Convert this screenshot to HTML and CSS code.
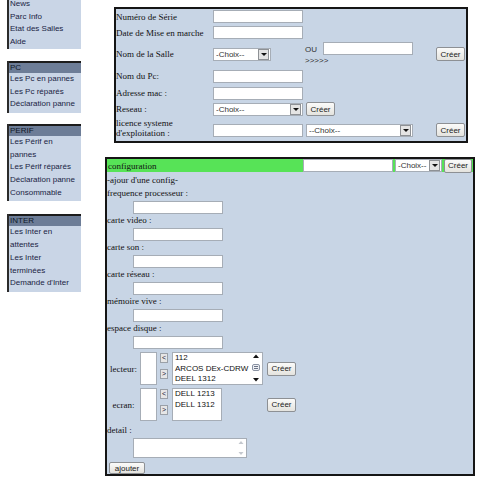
FILE: index.html
```html
<!DOCTYPE html>
<html lang="fr">
<head>
    <meta charset="UTF-8">
    <meta name="viewport" content="width=device-width, initial-scale=1.0">
    <title>Gestion du parc informatique</title>
    <link rel="stylesheet" href="styles.css">
</head>
<body>
<div class="page">
    <div class="menu">
        <div class="bloc premier">
            <ul>
                <li><a href="#">News</a></li>
                <li><a href="#">Parc Info</a></li>
                <li><a href="#">Etat des Salles</a></li>
                <li><a href="#">Aide</a></li>
            </ul>
        </div>
        <div class="bloc bloc-pc">
            <div class="titre">PC</div>
            <ul>
                <li><a href="#">Les Pc en pannes</a></li>
                <li><a href="#">Les Pc réparés</a></li>
                <li><a href="#">Déclaration panne</a></li>
            </ul>
        </div>
        <div class="bloc bloc-perif">
            <div class="titre">PERIF</div>
            <ul>
                <li><a href="#">Les Périf en<br>pannes</a></li>
                <li><a href="#">Les Périf réparés</a></li>
                <li><a href="#">Déclaration panne</a></li>
                <li><a href="#">Consommable</a></li>
            </ul>
        </div>
        <div class="bloc">
            <div class="titre">INTER</div>
            <ul>
                <li><a href="#">Les Inter en<br>attentes</a></li>
                <li><a href="#">Les Inter<br>terminées</a></li>
                <li><a href="#">Demande d'Inter</a></li>
            </ul>
        </div>
    </div>

    <div class="principal">
        <form class="fiche">
            <label>Numéro de Série</label>
            <input type="text" class="champ">

            <label>Date de Mise en marche</label>
            <input type="text" class="champ">

            <label>Nom de la Salle</label>
            <span class="deroulant sel-salle"><select><option>-Choix--</option></select><i class="fleche"></i></span>
            <div class="ou">
                <div class="ou-ligne"><span>OU</span><input type="text" class="champ"></div>
                <div class="fleches">&gt;&gt;&gt;&gt;&gt;</div>
            </div>
            <button type="button" class="bouton col4">Créer</button>

            <label>Nom du Pc:</label>
            <input type="text" class="champ">

            <label>Adresse mac :</label>
            <input type="text" class="champ">

            <label>Reseau :</label>
            <span class="deroulant sel-reseau"><select><option>-Choix--</option></select><i class="fleche"></i></span>
            <button type="button" class="bouton col3 decale">Créer</button>

            <label class="double">licence systeme d'exploitation :</label>
            <input type="text" class="champ bas">
            <span class="deroulant sel-os col3 decale bas"><select><option>--Choix--</option></select><i class="fleche"></i></span>
            <button type="button" class="bouton col4 bas">Créer</button>
        </form>

        <form class="config">
            <div class="entete">
                <span>configuration</span>
                <input type="text" class="champ">
                <span class="deroulant sel-config"><select><option>-Choix--</option></select><i class="fleche"></i></span>
                <button type="button" class="bouton">Créer</button>
            </div>
            <div class="corps">
                <div class="ligne">-ajour d'une config-</div>
                <div class="ligne">frequence processeur :</div>
                <input type="text" class="champ retrait">
                <div class="ligne">carte video :</div>
                <input type="text" class="champ retrait">
                <div class="ligne">carte son :</div>
                <input type="text" class="champ retrait">
                <div class="ligne">carte réseau :</div>
                <input type="text" class="champ retrait">
                <div class="ligne">mémoire vive :</div>
                <input type="text" class="champ retrait">
                <div class="ligne">espace disque :</div>
                <input type="text" class="champ retrait">

                <div class="choix">
                    <span class="nom">lecteur:</span>
                    <div class="liste petite"></div>
                    <div class="fleches-v"><button type="button">&lt;</button><button type="button">&gt;</button></div>
                    <div class="liste grande">
                        <div class="items">
                            <div>112</div>
                            <div>ARCOS DEx-CDRW</div>
                            <div>DEEL 1312</div>
                        </div>
                        <svg class="defile" width="8" height="30" viewBox="0 0 8 30">
                            <polygon points="1,5 4,1.5 7,5" fill="#111"/>
                            <rect x="0.5" y="11.5" width="7" height="6" rx="1.5" fill="#eef0f4" stroke="#8a93a3"/>
                            <line x1="2" y1="13.5" x2="6" y2="13.5" stroke="#6b7487"/>
                            <line x1="2" y1="15.5" x2="6" y2="15.5" stroke="#6b7487"/>
                            <polygon points="1,25 4,28.5 7,25" fill="#111"/>
                        </svg>
                    </div>
                    <button type="button" class="bouton">Créer</button>
                </div>

                <div class="choix">
                    <span class="nom">ecran:</span>
                    <div class="liste petite"></div>
                    <div class="fleches-v"><button type="button">&lt;</button><button type="button">&gt;</button></div>
                    <div class="liste moyenne">
                        <div class="items">
                            <div>DELL 1213</div>
                            <div>DELL 1312</div>
                        </div>
                    </div>
                    <button type="button" class="bouton">Créer</button>
                </div>

                <div class="ligne detail">detail :</div>
                <div class="zone retrait">
                    <svg class="defile" width="8" height="18" viewBox="0 0 8 18">
                        <polygon points="1.5,5 4,2 6.5,5" fill="#c4c8cf"/>
                        <polygon points="1.5,13 4,16 6.5,13" fill="#c4c8cf"/>
                    </svg>
                </div>
                <button type="button" class="bouton ajouter">ajouter</button>
            </div>
        </form>
    </div>
</div>
</body>
</html>
```

FILE: styles.css
```css
body {
    margin: 0;
    background: #fff;
    font-family: "Liberation Serif", serif;
    font-size: 9px;
    color: #111;
}
.page {
    display: flex;
    align-items: flex-start;
}

/* menu de gauche */
.menu {
    width: 74px;
    margin: -2px 0 0 7px;
    font-family: "Liberation Sans", sans-serif;
    font-size: 8px;
}
.bloc {
    background: #c9d5e6;
    border-left: 2px solid #2b2b2b;
    margin-bottom: 13px;
}
.bloc-pc {
    margin-bottom: 11px;
}
.premier {
    margin-bottom: 12px;
}
.bloc .titre {
    background: #6d7d97;
    border-top: 2px solid #1c1c1c;
    height: 10px;
    line-height: 10px;
    padding-left: 1px;
    color: #101828;
}
.bloc ul {
    list-style: none;
    margin: 0;
    padding: 0 0 2px 1px;
}
.premier ul {
    padding-bottom: 0;
}
.bloc li {
    line-height: 12.7px;
}
.bloc a {
    color: #1a2444;
    text-decoration: none;
}

/* champs communs */
.champ {
    width: 90px;
    height: 13px;
    box-sizing: border-box;
    border: 1px solid #a6adb6;
    background: #fff;
    padding: 0;
    margin: 0;
    font: 8px "Liberation Sans", sans-serif;
}
.bouton {
    width: 29px;
    height: 14px;
    box-sizing: border-box;
    padding: 0;
    border: 1px solid #8d9094;
    border-radius: 2px;
    background: linear-gradient(#fbfbfa, #e4e3de);
    font: 8px "Liberation Sans", sans-serif;
    color: #222;
}
.deroulant {
    display: inline-flex;
    align-items: center;
    height: 13px;
    box-sizing: border-box;
    border: 1px solid #a6adb6;
    background: #fff;
}
.deroulant select {
    -webkit-appearance: none;
    appearance: none;
    flex: 1;
    min-width: 0;
    height: 11px;
    border: 0;
    padding: 0 0 0 2px;
    background: transparent;
    font: 8px "Liberation Sans", sans-serif;
    color: #333;
    outline: none;
}
.deroulant .fleche {
    width: 9px;
    height: 9px;
    margin-right: 1px;
    border: 1px solid #8e9195;
    background: #e4e4e4;
    display: flex;
    align-items: center;
    justify-content: center;
}
.deroulant .fleche::after {
    content: "";
    border-left: 3px solid transparent;
    border-right: 3px solid transparent;
    border-top: 3px solid #111;
}
.sel-salle { width: 58px; }
.sel-reseau { width: 90px; }
.sel-os { width: 107px; }
.sel-config { width: 47px; }

/* fiche du haut */
.fiche {
    margin: 7px 0 0 33px;
    width: 354px;
    box-sizing: border-box;
    border: 2px solid #151515;
    background: #c8d5e5;
    padding-bottom: 2px;
    display: grid;
    grid-template-columns: 97px 92px 131px 30px;
    grid-template-rows: 15px 17px 26px 18px 16px 16px 22px;
    align-items: center;
}
.fiche label {
    grid-column: 1;
    white-space: nowrap;
}
.fiche label.double {
    white-space: normal;
    line-height: 10px;
}
.col3 { grid-column: 3; }
.col4 { grid-column: 4; }
.decale { margin-left: 1px; }
.bas { margin-top: 4px; }
.ou {
    grid-column: 3;
    align-self: start;
    font-family: "Liberation Sans", sans-serif;
    font-size: 8px;
    color: #333;
}
.ou-ligne {
    display: flex;
    align-items: flex-end;
    margin-top: 1px;
}
.ou-ligne span {
    width: 18px;
    line-height: 10px;
}
.fleches {
    line-height: 11px;
}

/* configuration */
.config {
    margin: 14px 0 0 24px;
    width: 370px;
    box-sizing: border-box;
    border: 2px solid #151515;
    background: #c8d5e5;
}
.entete {
    display: flex;
    align-items: center;
    gap: 2px;
    height: 13px;
    padding-right: 1px;
    background: #57e357;
}
.entete span:first-child {
    flex: 1;
    padding-left: 1px;
}
.entete .bouton {
    width: 28px;
}
.corps {
    padding-top: 2px;
}
.ligne {
    line-height: 13px;
}
.retrait {
    display: block;
    margin: 1px 0 0 26px;
}
.choix {
    display: flex;
    align-items: center;
    height: 33px;
    margin-top: 3px;
}
.choix .nom {
    width: 33px;
    text-align: center;
}
.liste {
    height: 33px;
    box-sizing: border-box;
    border: 1px solid #a6adb6;
    background: #fff;
    display: flex;
}
.liste.petite {
    width: 17px;
}
.liste.grande {
    width: 91px;
    margin-right: 4px;
}
.liste.moyenne {
    width: 50px;
    margin-right: 45px;
}
.items {
    flex: 1;
    padding: 0 0 0 2px;
    font: 8px "Liberation Sans", sans-serif;
    line-height: 10.5px;
    white-space: nowrap;
    overflow: hidden;
}
.liste .defile {
    margin: 0 2px 0 0;
}
.fleches-v {
    display: flex;
    flex-direction: column;
    gap: 6px;
    margin: 0 4px 0 3px;
    align-self: flex-start;
    padding-top: 1px;
}
.fleches-v button {
    width: 8px;
    height: 10px;
    padding: 0;
    border: 1px solid #9aa0a8;
    background: #e6e6e6;
    font: 7px "Liberation Sans", sans-serif;
    color: #223;
    line-height: 8px;
}
.detail {
    margin-top: 3px;
}
.zone {
    width: 114px;
    height: 20px;
    box-sizing: border-box;
    border: 1px solid #a6adb6;
    background: #fff;
    display: flex;
    justify-content: flex-end;
    align-items: center;
}
.zone .defile {
    margin-right: 1px;
}
.ajouter {
    display: block;
    width: 36px;
    height: 12px;
    margin: 4px 0 0 2px;
}
```
